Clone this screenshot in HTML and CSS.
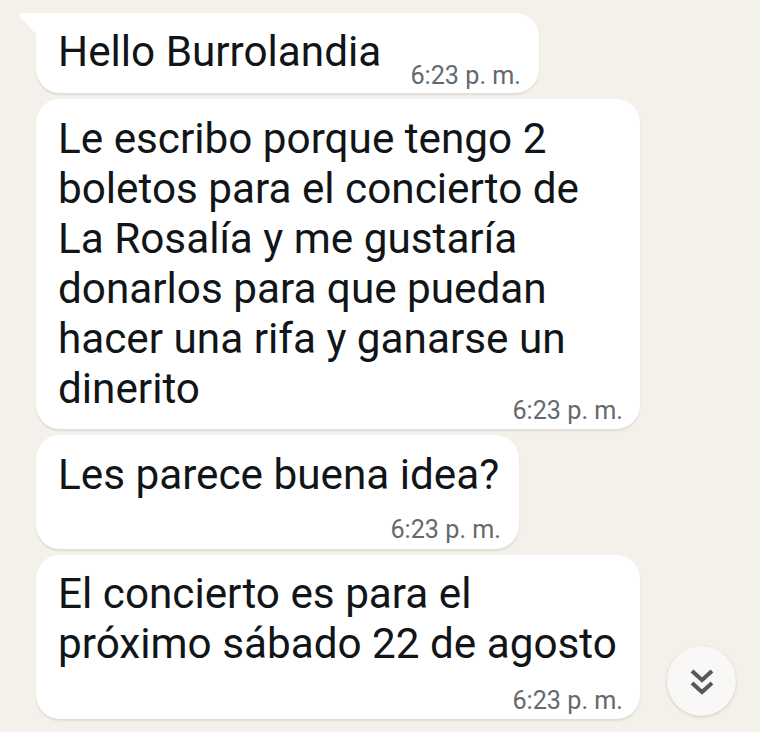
FILE: index.html
```html
<!DOCTYPE html>
<html lang="es">
<head>
    <meta charset="UTF-8">
    <meta name="viewport" content="width=device-width, initial-scale=1.0">
    <title>Chat</title>
    <link rel="stylesheet" href="styles.css">
</head>
<body>
    <div class="chat">
        <div class="burbuja primera">
            <svg class="cola" width="20" height="26" viewBox="0 0 20 26">
                <path d="M20 0H6C2 0 0.500 2.500 3 5L18 21C19 22.500 20 24 20 26Z" fill="#fff"/>
            </svg>
            <p class="texto">Hello Burrolandia</p>
            <span class="hora hora-lado">6:23 p. m.</span>
        </div>
        <div class="burbuja larga segunda">
            <p class="texto">Le escribo porque tengo 2<br>boletos para el concierto de<br>La Rosalía y me gustaría<br>donarlos para que puedan<br>hacer una rifa y ganarse un<br>dinerito</p>
            <span class="hora">6:23 p. m.</span>
        </div>
        <div class="burbuja tercera">
            <p class="texto">Les parece buena idea?</p>
            <span class="hora">6:23 p. m.</span>
        </div>
        <div class="burbuja larga cuarta">
            <p class="texto">El concierto es para el<br>próximo sábado 22 de agosto</p>
            <span class="hora">6:23 p. m.</span>
        </div>
    </div>

    <button class="bajar" type="button" aria-label="Bajar">
        <svg width="26" height="32" viewBox="0 0 26 32" fill="none" stroke="#54595d" stroke-width="4">
            <path d="M3 6L13 15L23 6"/>
            <path d="M3 18L13 27L23 18"/>
        </svg>
    </button>
</body>
</html>
```

FILE: styles.css
```css
body {
    margin: 0;
    height: 732px;
    overflow: hidden;
    background-color: #f4f1eb;
    font-family: Roboto, "Liberation Sans", sans-serif;
}

.chat {
    display: flex;
    flex-direction: column;
    align-items: flex-start;
    gap: 6px;
    padding: 13px 0 0 36px;
}

.burbuja {
    position: relative;
    box-sizing: border-box;
    padding: 13px 18px 0 22px;
    border-radius: 24px;
    background-color: #fff;
    box-shadow: 0 2px 2px rgba(120, 115, 100, 0.16);
}

.larga {
    width: 604px;
    padding-right: 17px;
}

.primera {
    display: flex;
    justify-content: space-between;
    width: 503px;
    height: 80px;
    padding-top: 14px;
    border-top-left-radius: 0;
}

.segunda {
    height: 330px;
    padding-top: 15px;
}

.tercera {
    width: 483px;
    height: 114px;
    padding-top: 15px;
}

.cuarta {
    height: 164px;
    padding-top: 14px;
}

.cola {
    position: absolute;
    top: 0;
    left: -18px;
}

.texto {
    margin: 0;
    font-size: 42.250px;
    line-height: 50px;
    color: #111518;
}

.hora {
    display: block;
    font-size: 25.200px;
    line-height: 28px;
    text-align: right;
    color: #65696d;
}

.hora-lado {
    align-self: flex-end;
    margin-bottom: 3px;
}

.segunda .hora {
    margin-top: -17px;
}

.tercera .hora {
    margin-top: 16px;
}

.cuarta .hora {
    margin-top: 18px;
}

.bajar {
    position: absolute;
    top: 646px;
    left: 667px;
    display: flex;
    align-items: center;
    justify-content: center;
    width: 69px;
    height: 70px;
    padding: 0;
    border: none;
    border-radius: 50%;
    background-color: #f9f8f7;
    box-shadow: 0 1px 3px rgba(120, 115, 100, 0.3);
}
```
